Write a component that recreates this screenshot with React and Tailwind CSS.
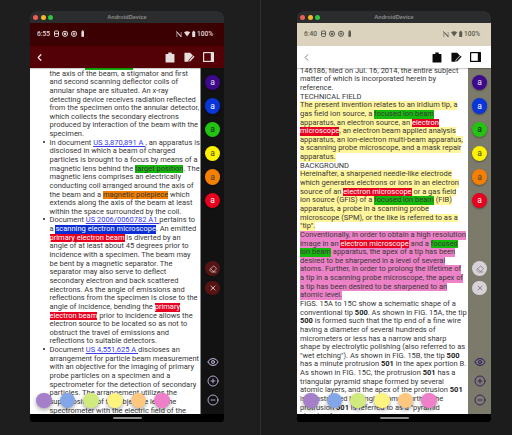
import React from 'react';
import { Eraser, X, Eye, CirclePlus, CircleMinus, ChevronLeft } from 'lucide-react';

const MARK = {
  g: 'bg-[#17b80d]',
  r: 'bg-[#e80020] text-white',
  b: 'bg-[#0b2ed6] text-white',
  o: 'bg-[#f27e00]',
  a: 'text-[#3a3ae8] underline',
  s: 'font-bold text-[#1a1a1a]',
};

const LEFT_LINES = [
  { segs: ['the axis of the beam, a stigmator and first'] },
  { segs: ['and second scanning deflector coils of'] },
  { segs: ['annular shape are situated. An x-ray'] },
  { segs: ['detecting device receives radiation reflected'] },
  { segs: ['from the specimen onto the annular detector,'] },
  { segs: ['which collects the secondary electrons'] },
  { segs: ['produced by interaction of the beam with the'] },
  { segs: ['specimen.'] },
  { bullet: true, segs: ['In document ', ['a', 'US 3,870,891 A '], ', an apparatus is'] },
  { segs: ['disclosed in which a beam of charged'] },
  { segs: ['particles is brought to a focus by means of a'] },
  { segs: ['magnetic lens behind the ', ['g', 'target position'], '. The'] },
  { segs: ['magnetic lens comprises an electrically'] },
  { segs: ['conducting coil arranged around the axis of'] },
  { segs: ['the beam and a ', ['o', 'magnetic polepiece'], ' which'] },
  { segs: ['extends along the axis of the beam at least'] },
  { segs: ['within the space surrounded by the coil.'] },
  { bullet: true, segs: ['Document ', ['a', 'US 2006/0060782 A1 '], 'pertains to'] },
  { segs: ['a ', ['b', 'scanning electron microscope'], '. An emitted'] },
  { segs: [['r', 'primary electron beam'], ' is diverted by an'] },
  { segs: ['angle of at least about 45 degrees prior to'] },
  { segs: ['incidence with a specimen. The beam may'] },
  { segs: ['be bent by a magnetic separator. The'] },
  { segs: ['separator may also serve to deflect'] },
  { segs: ['secondary electron and back scattered'] },
  { segs: ['electrons. As the angle of emissions and'] },
  { segs: ['reflections from the specimen is close to the'] },
  { segs: ['angle of incidence, bending the ', ['r', 'primary']] },
  { segs: [['r', 'electron beam'], ' prior to incidence allows the'] },
  { segs: ['electron source to be located so as not to'] },
  { segs: ['obstruct the travel of emissions and'] },
  { segs: ['reflections to suitable detectors.'] },
  { bullet: true, segs: ['Document ', ['a', 'US 4,551,625 A '], 'discloses an'] },
  { segs: ['arrangement for particle beam measurement'] },
  { segs: ['with an objective for the imaging of primary'] },
  { segs: ['probe particles on a specimen and a'] },
  { segs: ['spectrometer for the detection of secondary'] },
  { segs: ['particles. The arrangement utilizes the'] },
  { segs: ['superposition of the objective lens the'] },
  { segs: ['spectrometer with the electric field of the'] },
];

const Y = 'bg-[#fff59b]';
const P = 'bg-[#ee82c8]';

const RIGHT_LINES = [
  { segs: ['146186, filed on Jul. 16, 2014, the entire subject'] },
  { segs: ['matter of which is incorporated herein by'] },
  { segs: ['reference.'] },
  { segs: ['TECHNICAL FIELD'] },
  { bg: Y, segs: ['The present invention relates to an iridium tip, a'] },
  { bg: Y, segs: ['gas field ion source, a ', ['g', 'focused ion beam']] },
  { bg: Y, segs: ['apparatus, an electron source, an ', ['r', 'electron']] },
  { bg: Y, segs: [['r', 'microscope'], ', an electron beam applied analysis'] },
  { bg: Y, segs: ['apparatus, an ion-electron multi-beam apparatus,'] },
  { bg: Y, segs: ['a scanning probe microscope, and a mask repair'] },
  { bg: Y, segs: ['apparatus.'] },
  { segs: ['BACKGROUND'] },
  { bg: Y, segs: ['Hereinafter, a sharpened needle-like electrode'] },
  { bg: Y, segs: ['which generates electrons or ions in an electron'] },
  { bg: Y, segs: ['source of an ', ['r', 'electron microscope'], ' or a gas field'] },
  { bg: Y, segs: ['ion source (GFIS) of a ', ['g', 'focused ion beam'], ' (FIB)'] },
  { bg: Y, segs: ['apparatus, a probe in a scanning probe'] },
  { bg: Y, segs: ['microscope (SPM), or the like is referred to as a'] },
  { bg: Y, segs: ['"tip".'] },
  { bg: P, segs: ['Conventionally, in order to obtain a high resolution'] },
  { bg: P, segs: ['image in an ', ['r', 'electron microscope'], ' and a ', ['g', 'focused']] },
  { bg: P, segs: [['g', 'ion beam'], ' apparatus, the apex of a tip has been'] },
  { bg: P, segs: ['desired to be sharpened in a level of several'] },
  { bg: P, segs: ['atoms. Further, in order to prolong the lifetime of'] },
  { bg: P, segs: ['a tip in a scanning probe microscope, the apex of'] },
  { bg: P, segs: ['a tip has been desired to be sharpened to an'] },
  { bg: P, segs: ['atomic level.'] },
  { segs: ['FIGS. 15A to 15C show a schematic shape of a'] },
  { segs: ['conventional tip ', ['s', '500'], '. As shown in FIG. 15A, the tip'] },
  { segs: [['s', '500'], ' is formed such that the tip end of a fine wire'] },
  { segs: ['having a diameter of several hundreds of'] },
  { segs: ['micrometers or less has a narrow and sharp'] },
  { segs: ['shape by electrolytic polishing (also referred to as'] },
  { segs: ['"wet etching"). As shown in FIG. 15B, the tip ', ['s', '500']] },
  { segs: ['has a minute protrusion ', ['s', '501'], ' in the apex portion B.'] },
  { segs: ['As shown in FIG. 15C, the protrusion ', ['s', '501'], ' has a'] },
  { segs: ['triangular pyramid shape formed by several'] },
  { segs: ['atomic layers, and the apex of the protrusion ', ['s', '501']] },
  { segs: ['is constructed by single atoms. Further, the'] },
  { segs: ['protrusion ', ['s', '501'], ' is referred to as a "pyramid'] },
  { segs: ['structure".'] },
];

const SWATCHES = ['bg-[#a57fc9]', 'bg-[#82a6e8]', 'bg-[#d1ea7d]', 'bg-[#fdf37f]', 'bg-[#fdc77f]', 'bg-[#ee7fc8]'];

const DOTS = [
  ['bg-[#3d0a8c]', 'text-[#e8e0f0]'],
  ['bg-[#0a35d8]', 'text-white'],
  ['bg-[#22c40f]', 'text-[#123]'],
  ['bg-[#fff200]', 'text-[#444]'],
  ['bg-[#f57f00]', 'text-[#444]'],
  ['bg-[#e8001f]', 'text-white'],
];

function TextLine({ line }) {
  return (
    <div className={`h-[8.65px] w-fit whitespace-pre leading-[8.65px] ${line.bg || ''}`}>
      {line.bullet && <span className="ml-[-6.5px] mr-[4.5px] inline-block h-[2px] w-[2px] rounded-full bg-[#222] align-[2px]" />}
      {line.segs.map((seg, i) =>
        typeof seg === 'string' ? (
          <span key={i}>{seg}</span>
        ) : (
          <span key={i} className={`inline-block h-[8.65px] ${MARK[seg[0]] || ''}`}>{seg[1]}</span>
        )
      )}
    </div>
  );
}

function StatusIcons({ color }) {
  return (
    <svg width="34" height="8" viewBox="0 0 34 8" fill="none" stroke={color} strokeWidth="1">
      <rect x="1.5" y="1" width="4" height="5.5" rx="1" />
      <path d="M2 3.7h3" />
      <circle cx="12" cy="3.8" r="2.6" />
      <circle cx="12" cy="3.8" r="0.9" fill={color} />
      <circle cx="21" cy="3.8" r="2.6" />
      <path d="M19.6 3.8h2.8M21 2.4v2.8" />
      <rect x="28.4" y="1.2" width="2.6" height="5.6" fill={color} stroke="none" />
      <rect x="29" y="0.3" width="1.4" height="1" fill={color} stroke="none" />
    </svg>
  );
}

function StatusRight({ color }) {
  return (
    <svg width="21" height="8" viewBox="0 0 21 8" fill={color}>
      <path d="M1.5 2h1.2l3 3.6V2h.8v5H5.6l-3.3-4v4h-.8z" opacity="0.75" />
      <path d="M1 1l5.6 6" stroke={color} strokeWidth="0.6" />
      <path d="M9 2.2c1.8-1.4 4.4-1.4 6.2 0l-3.1 4.4z" />
      <rect x="17.2" y="1.6" width="3" height="5.4" rx="0.4" />
      <rect x="18" y="0.8" width="1.4" height="0.9" />
    </svg>
  );
}

function ClipIcon({ color }) {
  return (
    <svg width="10" height="11" viewBox="0 0 11 12" fill={color}>
      <path d="M1 2.2h2.6V.6h3.8v1.6H10a.4.4 0 0 1 .4.4v8.6a.4.4 0 0 1-.4.4H1a.4.4 0 0 1-.4-.4V2.6a.4.4 0 0 1 .4-.4z" />
    </svg>
  );
}

function NoteIcon({ color, gap }) {
  return (
    <svg width="11" height="10.5" viewBox="0 0 12 11" fill={color}>
      <path d="M.5.5h6.2l3 3-4.6 5 .1 2H.5z" />
      <path d="M5.6 8.6l4.6-5 1.5 1.4-4.7 5-1.6.3z" stroke={gap} strokeWidth="0.5" />
    </svg>
  );
}

function PanelIcon({ line, inner }) {
  return (
    <svg width="11" height="10" viewBox="0 0 11 10">
      <rect x="0" y="0" width="11" height="10" rx="0.6" fill={line} />
      <rect x="1.2" y="1.2" width="6.6" height="7.6" fill={inner} />
    </svg>
  );
}

function Phone({ dark, lines, topClass, sideBg, sideBtn, sideBtnText, sideIcon }) {
  const iconColor = dark ? '#e6dede' : '#0b0b0b';
  const statusColor = dark ? '#e4dcdc' : '#5d5a52';
  return (
    <div className="flex h-[411px] w-[194px] flex-col overflow-hidden rounded-t-[6px] rounded-b-[4px] bg-black">
      <div className="relative flex h-[12px] shrink-0 items-center justify-center bg-[#2b2c2d]">
        <div className="absolute left-[3px] flex gap-[2.6px]">
          <span className="h-[5px] w-[5px] rounded-full bg-[#ec5f57]" />
          <span className="h-[5px] w-[5px] rounded-full bg-[#f5b62c]" />
          <span className="h-[5px] w-[5px] rounded-full bg-[#2ec342]" />
        </div>
        <span className="font-['Liberation_Sans',sans-serif] text-[5.6px] font-bold text-[#8b8b8b]">AndroidDevice</span>
      </div>

      <div className={`flex h-[23px] shrink-0 items-center justify-between pl-[7px] pr-[11px] font-['Roboto',sans-serif] text-[6.6px] font-medium ${dark ? 'bg-[#3a0002] text-[#e4dcdc]' : 'bg-[#dbd3bd] text-[#5d5a52]'}`}>
        <div className="flex items-center gap-[3px]">
          <span>{dark ? '6:55' : '6:40'}</span>
          <StatusIcons color={statusColor} />
        </div>
        <div className="flex items-center gap-[1px]">
          <StatusRight color={statusColor} />
          <span>100%</span>
        </div>
      </div>

      <div className={`relative z-10 flex h-[22px] shrink-0 items-center pl-[4px] pr-[10px] shadow-[0_1px_1px_rgba(0,0,0,0.2)] ${dark ? 'bg-[#540007]' : 'bg-white'}`}>
        <ChevronLeft size={11} strokeWidth={dark ? 2.6 : 1.6} color={dark ? '#f0e8e8' : '#555'} />
        <div className="ml-auto flex items-center">
          <ClipIcon color={iconColor} />
          <div className="ml-[9px] mr-[8px] flex">
            <NoteIcon color={iconColor} gap={dark ? '#540007' : '#fff'} />
          </div>
          <PanelIcon line={iconColor} inner={dark ? '#540007' : '#fff'} />
        </div>
      </div>

      <div className="relative flex h-[346px] shrink-0">
        <div className={`h-full w-[171px] shrink-0 overflow-hidden bg-white font-['Roboto',sans-serif] text-[7.5px] text-[#383838] ${dark ? 'border-r border-[#888]' : ''}`}>
          <div className={topClass}>
            {dark && <div className="ml-[35.5px] h-[1.6px] w-[48px] bg-[#17b80d]" />}
            {lines.map((line, i) => (
              <TextLine key={i} line={line} />
            ))}
          </div>
        </div>

        <div className={`flex flex-1 flex-col items-center pb-[8px] pt-[6.5px] ${sideBg}`}>
          <div className="flex flex-col gap-[8.2px]">
            {DOTS.map(([bg, color], i) => (
              <div key={i} className={`flex h-[15.5px] w-[15.5px] items-center justify-center rounded-full font-['Roboto',sans-serif] text-[8.5px] shadow-[0_1px_2px_rgba(0,0,0,0.35)] ${bg} ${color}`}>a</div>
            ))}
          </div>
          <div className="mt-[53px] flex flex-col gap-[4.6px]">
            <div className={`flex h-[14.5px] w-[14.5px] items-center justify-center rounded-full ${sideBtn}`}>
              <Eraser size={8} strokeWidth={2} className={sideBtnText} />
            </div>
            <div className={`flex h-[14.5px] w-[14.5px] items-center justify-center rounded-full ${sideBtn}`}>
              <X size={8} strokeWidth={2.4} className={sideBtnText} />
            </div>
          </div>
          <div className={`mt-auto flex flex-col items-center gap-[7px] ${sideIcon}`}>
            <Eye size={12} strokeWidth={1.8} />
            <CirclePlus size={12} strokeWidth={1.6} />
            <CircleMinus size={12} strokeWidth={1.6} />
          </div>
        </div>

        <div className="absolute bottom-[6px] left-[6.3px] flex gap-[8.1px]">
          {SWATCHES.map((c) => (
            <div key={c} className={`h-[15.5px] w-[15.5px] rounded-full shadow-[0_2px_4px_rgba(0,0,0,0.35)] ${c}`} />
          ))}
        </div>
      </div>

      <div className="flex flex-1 items-center justify-center bg-black">
        <div className="h-[2px] w-[29px] rounded-full bg-[#8a8a8a]" />
      </div>
    </div>
  );
}

export default function App() {
  return (
    <div className="flex h-[435px] w-[512px] overflow-hidden bg-[#1e1e1e]">
      <div className="h-full w-[260.5px] shrink-0 border-r border-[#303030] pl-[30px] pt-[11px]">
        <Phone
          dark
          lines={LEFT_LINES}
          topClass="pl-[19.5px]"
          sideBg="bg-[#121212]"
          sideBtn="bg-[#561414]"
          sideBtnText="text-[#e8dede]"
          sideIcon="text-[#d9c8f5]"
        />
      </div>
      <div className="h-full flex-1 bg-[#1c1c1c] pl-[36.5px] pt-[11px]">
        <Phone
          lines={RIGHT_LINES}
          topClass="mt-[-1.3px] pl-[3px]"
          sideBg="bg-[#7c7a6b]"
          sideBtn="bg-[#d6d2d8]"
          sideBtnText="text-[#77757a]"
          sideIcon="text-[#241063]"
        />
      </div>
    </div>
  );
}
